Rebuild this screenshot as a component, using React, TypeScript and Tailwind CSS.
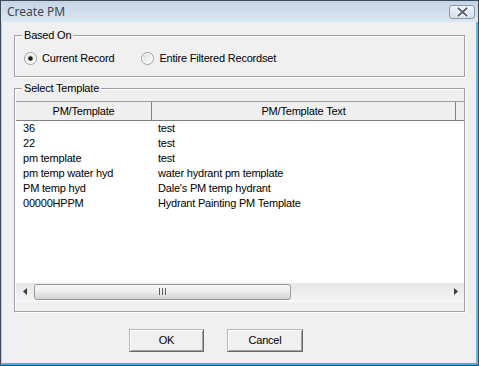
import React from "react";

const rows: [string, string][] = [
  ["36", "test"],
  ["22", "test"],
  ["pm template", "test"],
  ["pm temp water hyd", "water hydrant pm template"],
  ["PM temp hyd", "Dale's PM temp hydrant"],
  ["00000HPPM", "Hydrant Painting PM Template"],
];

function Radio({ checked, id }: { checked?: boolean; id: string }) {
  return (
    <svg width="13" height="13" viewBox="0 0 13 13" className="shrink-0">
      <defs>
        <linearGradient id={id} x1="0" y1="0" x2="1" y2="1">
          <stop offset="0" stopColor="#dcdcdc" />
          <stop offset="1" stopColor="#ffffff" />
        </linearGradient>
      </defs>
      <circle cx="6.5" cy="6.5" r="6" fill="#ffffff" stroke="#9a9b9b" strokeWidth="1" />
      <circle cx="6.5" cy="6.5" r="4.5" fill={`url(#${id})`} />
      {checked && <circle cx="6.5" cy="6.5" r="2.3" fill="#1a1a1a" />}
    </svg>
  );
}

function GroupBox({
  label,
  className,
  children,
}: {
  label: string;
  className: string;
  children?: React.ReactNode;
}) {
  return (
    <div
      className={`relative box-border border border-[#a0a0a0] shadow-[inset_1px_1px_0_#ffffff,1px_1px_0_#ffffff] ${className}`}
    >
      <span className="absolute left-[7px] top-[-8px] px-[2px] bg-[#f0f0f0] leading-[14px]">
        {label}
      </span>
      {children}
    </div>
  );
}

function Button({ label, w }: { label: string; w: string }) {
  return (
    <div
      className={`${w} h-[23px] box-border flex items-center justify-center border border-t-[#b9b9b9] border-l-[#b9b9b9] border-r-[#696969] border-b-[#696969] bg-[#f0f0f0] shadow-[inset_1px_1px_0_#ffffff,inset_-1px_-1px_0_#a0a0a0]`}
    >
      {label}
    </div>
  );
}

export default function App() {
  return (
    <div className="w-[479px] h-[366px] box-border flex flex-col border border-[#3d4a57] bg-[#f0f0f0] text-black text-[11px] tracking-[-0.2px] font-['Liberation_Sans',Arial,sans-serif]">
      {/* Title bar */}
      <div className="h-[21px] shrink-0 flex items-start justify-between pl-[6px] pr-[3px] bg-gradient-to-b from-[#c5d4e5] to-[#dce7f3]">
        <span className="mt-[3px] text-[12px] tracking-[0px] leading-[16px] text-[#3b4755] font-['Noto_Sans','Liberation_Sans',sans-serif]">
          Create PM
        </span>
        <div className="mt-[4px] w-[26px] h-[14px] box-border rounded-[3px] border border-[#8d9aab] bg-gradient-to-b from-[#eef3f8] to-[#d5dfea] flex items-center justify-center">
          <svg width="13" height="10" viewBox="0 0 13 10">
            <path d="M2.5 1.5 L10.5 8.5 M10.5 1.5 L2.5 8.5" stroke="#ffffff" strokeWidth="3.8" strokeLinecap="square" />
            <path d="M2.5 1.5 L10.5 8.5 M10.5 1.5 L2.5 8.5" stroke="#59667a" strokeWidth="2" strokeLinecap="square" />
          </svg>
        </div>
      </div>

      {/* Client area */}
      <div className="flex-1 flex flex-col border-l border-l-[#a9cfea] border-r-2 border-r-[#58bcea] border-b-2 border-b-[#3fb0e6]">
        <GroupBox label="Based On" className="mt-[13px] ml-[12px] w-[451px] h-[42px]">
          <div className="flex items-center h-[13px] mt-[16px] pl-[9px]">
            <Radio checked id="r1" />
            <span className="ml-[5px] leading-[13px]">Current Record</span>
            <span className="ml-[27px] flex items-center">
              <Radio id="r2" />
              <span className="ml-[5px] leading-[13px]">Entire Filtered Recordset</span>
            </span>
          </div>
        </GroupBox>

        <GroupBox label="Select Template" className="mt-[11px] ml-[12px] w-[451px] h-[224px]">
          <div className="ml-[1px] mt-[12px] w-[448px] h-[201px] flex flex-col">
            {/* header */}
            <div className="h-[20px] shrink-0 flex box-border border-t border-t-[#a0a0a0] border-b border-b-[#808080] bg-[#efefef]">
              <div className="w-[136px] box-border border-r border-r-[#808080] flex items-center justify-center">
                PM/Template
              </div>
              <div className="w-[304px] box-border border-r border-r-[#808080] flex items-center justify-center">
                PM/Template Text
              </div>
              <div className="flex-1" />
            </div>
            {/* body */}
            <div className="flex-1 bg-white">
              {rows.map(([a, b]) => (
                <div key={a} className="h-[15px] flex items-center leading-[15px]">
                  <div className="w-[136px] pl-[7px] whitespace-nowrap">{a}</div>
                  <div className="pl-[6px] whitespace-nowrap">{b}</div>
                </div>
              ))}
            </div>
            {/* horizontal scrollbar */}
            <div className="h-[17px] shrink-0 flex items-center bg-gradient-to-b from-[#e6e6e6] to-[#f3f3f3]">
              <div className="w-[17px] h-full flex items-center justify-center">
                <svg width="4" height="7" viewBox="0 0 4 7">
                  <path d="M4 0 L0 3.5 L4 7 Z" fill="#3c3c3c" />
                </svg>
              </div>
              <div className="ml-[1px] w-[257px] h-[16px] box-border rounded-[3px] border border-[#9a9a9a] bg-gradient-to-b from-[#f8f8f8] via-[#ececec] to-[#d2d2d2] flex items-center justify-center">
                <svg width="7" height="7" viewBox="0 0 7 7">
                  <path d="M0.5 0 V7 M3.5 0 V7 M6.5 0 V7" stroke="#5e5e5e" strokeWidth="1" />
                </svg>
              </div>
              <div className="flex-1" />
              <div className="w-[17px] h-full flex items-center justify-center">
                <svg width="4" height="7" viewBox="0 0 4 7">
                  <path d="M0 0 L4 3.5 L0 7 Z" fill="#3c3c3c" />
                </svg>
              </div>
            </div>
            <div className="h-[2px] shrink-0 bg-[#f7f7f7]" />
          </div>
        </GroupBox>

        <div className="mt-[17px] ml-[127px] flex gap-[23px]">
          <Button label="OK" w="w-[75px]" />
          <Button label="Cancel" w="w-[76px]" />
        </div>
      </div>
    </div>
  );
}
